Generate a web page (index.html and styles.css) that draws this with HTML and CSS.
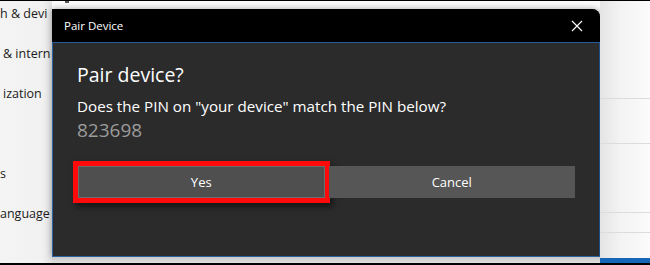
FILE: index.html
```html
<!DOCTYPE html>
<html>
<head>
<meta charset="utf-8">
<link rel="stylesheet" href="styles.css">
</head>
<body>
<div class="frame">
  <div class="sidebar">
    <div class="nav">h &amp; devi</div>
    <div class="nav nav-in2">&amp; intern</div>
    <div class="nav nav-in">ization</div>
    <div class="nav"></div>
    <div class="nav">s</div>
    <div class="nav">anguage</div>
  </div>
  <div class="center">
    <div class="topstrip"><span class="tick"></span></div>
    <div class="dialog">
      <div class="titlebar">
        <span class="title">Pair Device</span>
        <svg class="close" width="12" height="12" viewBox="0 0 12 12"><path d="M1 1 L11 11 M11 1 L1 11" stroke="#fff" stroke-width="1.1" fill="none"/></svg>
      </div>
      <div class="body">
        <div class="heading">Pair device?</div>
        <div class="question">Does the PIN on "your device" match the PIN below?</div>
        <div class="pin">823698</div>
        <div class="buttons">
          <div class="btn btn-yes">Yes</div>
          <div class="btn">Cancel</div>
        </div>
      </div>
    </div>
    <div class="bottomstrip"></div>
  </div>
  <div class="rightpane">
    <div class="rp-row r1"></div>
    <div class="rp-row r2"></div>
    <div class="rp-row r3"></div>
    <div class="rp-row r4"></div>
    <div class="rp-fill"></div>
    <div class="rp-blue"></div>
  </div>
</div>
</body>
</html>
```

FILE: styles.css
```css
html, body {
  margin: 0;
  padding: 0;
  background: #000;
}
body {
  width: 650px;
  height: 265px;
  overflow: hidden;
  font-family: "Open Sans", "Noto Sans", sans-serif;
}
.frame {
  margin-top: 1px;
  height: 262px;
  display: grid;
  grid-template-columns: 52px 548px 50px;
  background: #f3f3f3;
}
.sidebar {
  background: linear-gradient(to right, #f4f4f4 0%, #f1f1f1 80%, #e2e2e2 100%);
  padding-top: 2px;
  overflow: hidden;
}
.nav {
  height: 40px;
  line-height: 22px;
  font-size: 12.5px;
  color: #1a1a1a;
  white-space: nowrap;
}
.nav-in { padding-left: 3px; }
.nav-in2 { padding-left: 3px; }
.center {
  display: flex;
  flex-direction: column;
}
.topstrip {
  height: 8px;
  background: #fbfbfb;
  display: flex;
}
.tick {
  width: 4px;
  height: 2px;
  margin-left: 13px;
  background: #555;
}
.dialog {
  height: 248px;
  display: flex;
  flex-direction: column;
  background: #2b2b2b;
  border-top-right-radius: 8px;
  box-shadow: 0 0 6px rgba(0,0,0,0.35);
}
.titlebar {
  height: 33px;
  background: #000;
  border-top-right-radius: 8px;
  border-bottom: 1px solid #245d99;
  display: flex;
  align-items: center;
  justify-content: space-between;
  padding: 0 17px 0 12px;
}
.title {
  color: #fff;
  font-size: 11.5px;
  padding-bottom: 1px;
}
.close { display: block; }
.body {
  flex: 1;
  border-left: 1px solid #2a64a4;
  border-right: 1px solid #1c4e85;
  border-bottom: 1px solid #2a64a4;
  padding: 18px 0 0 24px;
  display: flex;
  flex-direction: column;
}
.heading {
  color: #fff;
  font-size: 19.5px;
  line-height: 28px;
}
.question {
  color: #fff;
  font-size: 15.2px;
  line-height: 22px;
  margin-top: 6px;
}
.pin {
  color: #9b9b9b;
  font-size: 19px;
  line-height: 24px;
  margin-top: 1px;
}
.buttons {
  margin-top: 24px;
  width: 497px;
  margin-left: 1px;
  display: grid;
  grid-template-columns: 1fr 1fr;
  gap: 4px;
}
.btn {
  height: 32px;
  box-sizing: border-box;
  background: #565656;
  color: #fff;
  font-size: 13px;
  display: flex;
  align-items: center;
  justify-content: center;
}
.btn-yes {
  background: #4f4f4f;
  border: 1px solid #6c6c6c;
  outline: 4px solid #ff0a0a;
  outline-offset: 1px;
  box-shadow: 0 0 0 5px #ff0a0a, 3px 4px 6px 5px rgba(0,0,0,0.5);
}
.bottomstrip {
  flex: 1;
  background: linear-gradient(to bottom, #c9c9c9, #dedede);
}
.rightpane {
  display: flex;
  flex-direction: column;
  background: linear-gradient(to right, #e4e4e4 0%, #f3f3f3 40%, #fbfbfb 100%);
}
.rp-row { border-bottom: 1px solid #dcdcdc; }
.r1 { height: 97px; }
.r2 { height: 44px; }
.r3 { height: 68px; }
.r4 { height: 19px; }
.rp-fill { flex: 1; }
.rp-blue { height: 5px; background: #1666b8; }
```
